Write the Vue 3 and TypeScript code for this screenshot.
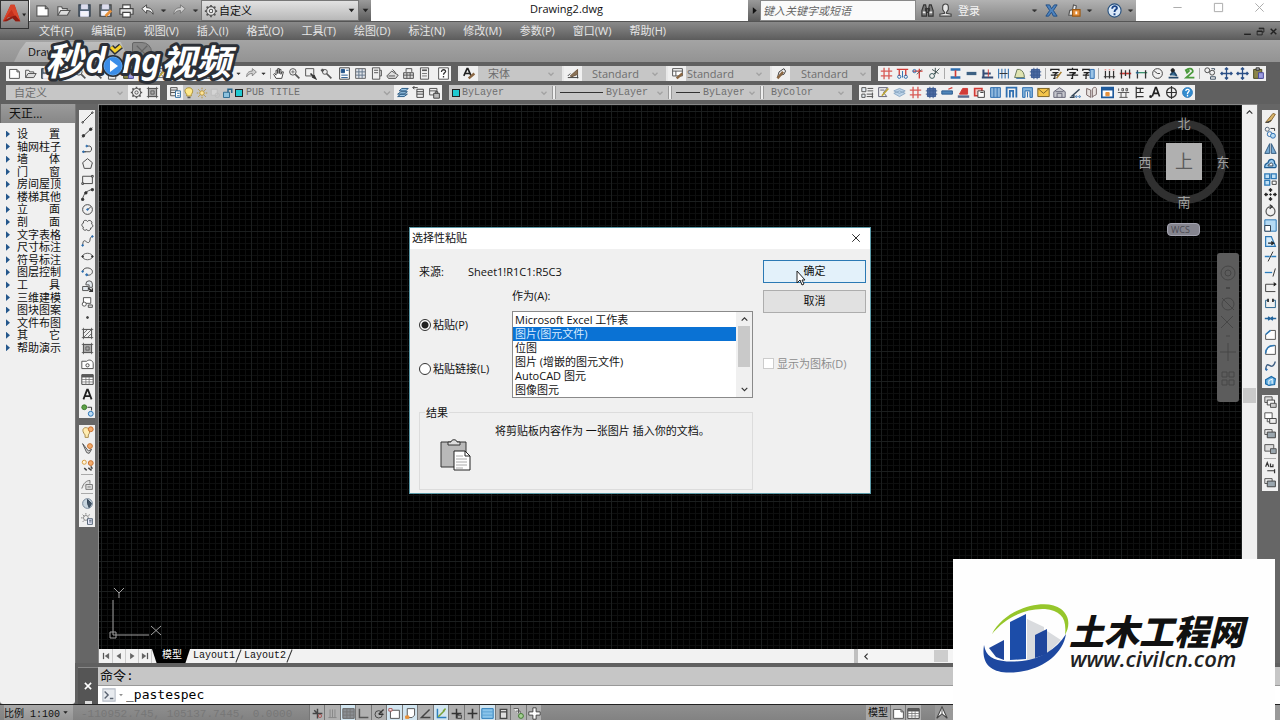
<script setup lang="ts">
import { h, ref } from 'vue'

const B = '#2f6fb0'
const R = '#d23b36'
const O = '#e8913a'

const p = (d: string, stroke = '#4a4a4a', fill = 'none', w = 1.2) =>
  `<path d="${d}" stroke="${stroke}" fill="${fill}" stroke-width="${w}"/>`
const c = (x: number, y: number, r: number, stroke = '#4a4a4a', fill = 'none', w = 1.2) =>
  `<circle cx="${x}" cy="${y}" r="${r}" stroke="${stroke}" fill="${fill}" stroke-width="${w}"/>`

const icons: Record<string, string> = {
  new: p('M2 3h9l3 3v8H2z', '#555', '#fff') + p('M11 3v3h3', '#555'),
  open: p('M2 13V4h4l1 2h5v2', '#555', '#eee') + p('M2 13l3-5h10l-3 5z', '#555', '#ddd'),
  save: p('M2 2h12v12H2z', '#35414d', '#56677a') + p('M5 2h6v4H5z', '#dde', '#dde') + p('M4 9h8v5H4z', '#eef', '#f4f4f8'),
  saveas: p('M2 2h12v12H2z', '#444', '#67727f') + p('M5 2h6v4H5z', '#dde', '#dde') + p('M4 9h8v4H4z', '#eef', '#f4f4f8') + p('M8 14l6-6', O, 'none', 3),
  print: p('M4 6V2h8v4', '#444', '#fff') + p('M1 6h14v6H1z', '#444', '#e4e4e4') + p('M4 10h8v5H4z', '#444', '#fff'),
  undo: p('M2 6l5-4v3c5 0 7 3 7 7-2-3-4-4-7-4v3z', '#444', '#f4f4f4', 1),
  redo: p('M14 6L9 2v3C4 5 2 8 2 12c2-3 4-4 7-4v3z', '#777', '#d0d0d0', 1),
  tinydown: p('M5 7h6l-3 3z', '#333', '#333', 1),
  down: p('M3 5h10l-5 6z', '#222', '#222', 0),
  play: p('M5 2l7 6-7 6z', '#111', '#111', 0),
  chev: p('M4 6l4 4 4-4', '#a2a2a2', 'none', 2),
  chevdark: p('M3 5l5 5 5-5', '#333', 'none', 2),
  chevup: p('M3 10l5-5 5 5', '#333', 'none', 2),
  chevleft: p('M10 3L5 8l5 5', '#333', 'none', 2),
  gear: c(8, 8, 5, '#555', '#eee') + c(8, 8, 2, '#555') + p('M8 1v2M8 13v2M1 8h2M13 8h2M3 3l2 2M11 11l2 2M13 3l-2 2M5 11l-2 2', '#555', 'none', 2),
  binoc: p('M2 14V8l2-6h2l1 5v7zM14 14V8l-2-6h-2L9 7v7zM6 6h4v4H6z', '#333', '#777') + p('M3 10h3M10 10h3', '#eee', 'none', 2),
  user: p('M5 4a3 3 0 016 0v3L9 10v1l5 1v2H2v-2l5-1v-1L5 7z', '#444', '#e6e6e6'),
  exch: p('M2 2h4l2 4 3-4h3l-4 6 4 6h-4l-2-4-3 4H2l4-6z', '#1f4d85', '#4e83bd', 1),
  key: p('M3 13l1-5 3-1 1-5 3 1-1 6 3 4z', '#555', '#eee') + p('M7 7h8v7H7z', '#9b5a16', O) + p('M11 9v3', '#fff', 'none', 2),
  help: c(8, 8, 7, '#28517e', '#dbe9f8') + p('M5.500 6c0-4 6-3 5 0-1 1-2.500 1.500-2.500 3.500M8 11v2', '#1a4488', 'none', 2),
  hand: p('M5 14L2 9l1-1 2 2V4h2v4-6h2v6-5h2v6l1-3h2l-2 8z', '#444', '#fff'),
  zoom: c(6, 6, 4, '#555', '#eee') + p('M9 9l5 5', '#555', 'none', 2) + p('M6 4v4M4 6h4', '#777'),
  zoomw: p('M2 2h10v9H2z', '#555') + p('M8 8l6 6M10 12l4 2-2-4', '#333', '#eee', 2),
  zoomp: c(6, 6, 3, '#555', '#eee') + p('M1 4h4M3 2v4M8 8l6 6', '#555', 'none', 2),
  props: p('M2 1h12v14H2z', '#444', '#fff') + p('M4 3h4v4H4z', '#24558c', '#24558c') + p('M10 4h3M4 10h8M4 13h8', '#24558c'),
  center: p('M2 2h12v12H2z', '#666', '#e1e4ea') + p('M2 6h12M2 10h12M6 2v12M10 2v12', '#66788c'),
  palette: p('M3 1h9v14H3z', '#555', '#eee') + p('M5 4h5M5 7h5M12 4h2v7h-2', '#555'),
  sheet: p('M1 11l6-6 8 5-3 4H3z', '#555', '#ddd') + p('M3 11h8M8 3l4 4', '#555'),
  markup: p('M2 7h12v7H2z', '#555', '#ddd') + p('M5 6V2h7v4M2 10h12M6 7v7M10 7v7', '#555'),
  laylock: p('M2 3h9v8H2zM2 6h9', '#555', '#eee') + p('M7 9h7v6H7z', '#444', '#bbb') + p('M9 9V7h3v2', '#444'),
  calc: p('M3 1h10v14H3z', '#555', '#eee') + p('M5 4h6', '#555', 'none', 2) + p('M5 8h6M5 11h6', '#777'),
  qm: p('M2 1h12v14H2z', '#555', '#fff') + p('M5.500 6c0-4 6-3 5 0-1 1-2.500 1.500-2.500 3.500M8 11v2', '#333', 'none', 1.600),
  astyle: p('M1 11L5 2h1l4 9M3 8h6', '#222', 'none', 2) + p('M7 14l7-6', '#8b6844', 'none', 3),
  dimstyle: p('M1 13h13M13 9v5M1 11l3-3', '#444') + p('M4 11l9-8v6l-7 3z', '#6d553e', '#8c7357'),
  tabstyle: p('M2 2h12v9H2zM2 5h12M6 5v6', '#555', '#fff') + p('M7 14l7-6', '#8b6844', 'none', 3),
  mlstyle: p('M3 13l2-7 6-4 2 3-2 4-4 1', '#444') + p('M3 14l7-8', '#8b6844', 'none', 3),
  layers: p('M2 2h8v10H2zM2 5h8M2 8h8', '#555', '#eee') + p('M8 6h6v8H8zM10 9h3M10 12h3', '#336f9f', '#fff'),
  bulb: p('M5 10C0 4 4 1 8 1s7 4 3 9v2H5z', '#a88b2d', '#ffe98a') + p('M6 14h4', '#555', 'none', 2),
  sun: c(8, 8, 3, '#b28e33', '#ffe59a') + p('M8 1v2M8 13v2M1 8h2M13 8h2M3 3l2 2M11 11l2 2M13 3l-2 2M5 11l-2 2', '#b28e33'),
  freeze: p('M3 3h8v8H3z', '#bbb', '#d4d4d4') + c(11, 11, 3, '#bbb'),
  lock: p('M2 7h8v7H2z', '#27658a', '#8cc1dd') + p('M8 7V3h5v5', '#27658a', 'none', 2),
  layprev: p('M2 10l4-3h8l-4 3zM2 13l4-3h8l-4 3zM4 6l3-3h8l-3 3z', '#2c5c84', '#9cc6e5'),
  layst: p('M6 4h8v10H6zM6 7h8M6 10h8M1 2h6M1 2l2 2M1 2l2-2', '#444'),
  axis: p('M5 1v14M11 1v14M1 5h14M1 11h14', '#d85a55', 'none', 1.600),
  axis2: p('M1 3h14M4 3v8M12 3v8', R, 'none', 1.600) + c(4, 12, 2, B) + c(12, 12, 2, B) + p('M8 5v8', B),
  axis3: p('M1 5h12M9 2v12', R, 'none', 1.600) + c(3, 5, 2, B) + p('M6 9l6-6', '#555'),
  cut: c(5, 11, 3, '#355') + p('M7 9l7-7M5 3l8 5M9 1v8', '#455'),
  ibeam: p('M2 3h12M2 13h12', B, 'none', 3) + p('M8 4v8', R, 'none', 2),
  minus: p('M2 8h12', '#3d6183', 'none', 4),
  wall: p('M1 13h14M3 3v9M3 8h9', '#354c75', 'none', 2.500) + p('M9 3v9', R),
  split: p('M2 2v12M14 2v12M6 2v12M10 2v12', B, 'none', 1.300) + p('M3 8h10', '#333'),
  fan: p('M2 13L5 3h3c4 1 6 5 6 10z', '#68785a', '#dfe3b0') + p('M4 14h11', B),
  column: p('M3 3h10v10H3z', '#3c5a92', '#4d6ba3') + p('M1 6h14M1 10h14M6 1v14M10 1v14', '#3c5a92'),
  zi: p('M2 5V3h12v2M8 1v2M4 7h8L8 9v5H6M1 10h14', '#222', 'none', 1.600),
  zipen: p('M1 5V3h10v2M3 7h6L6 9v5H4M1 10h10', '#222', 'none', 1.500) + p('M8 14l6-8', '#a87c28', 'none', 2),
  zidoc: p('M1 5V3h8v2M2 7h6L5 9v5H4M1 10h8', '#222', 'none', 1.500) + p('M10 3h5v11h-5z', B, '#9bc4e6'),
  dims: p('M1 12h14M3 5v9M8 5v9M13 5v9', '#333', 'none', 1.500) + p('M3 3v1M8 3v1M13 3v1', R, 'none', 2),
  dimr: p('M1 8h14', R, 'none', 2) + p('M3 3v11M13 3v11M8 4v7', '#333', 'none', 1.600),
  dimg: p('M1 7h14', '#2c8a62', 'none', 1.500) + p('M3 4v10M13 4v10', '#333', 'none', 1.600) + c(3, 7, 1, B),
  clock: c(8, 8, 6, '#444') + p('M8 8L4 5M8 8h3', '#444'),
  person: p('M2 13h12M4 10l4-5 4 6', '#25496a', '#386f98', 2) + c(7, 4, 2, '#222', '#222'),
  green: p('M4 5c1-4 9-4 8 1L4 13h10M3 3l2 4 3-3', '#4a9a3c', 'none', 2.200),
  copyc: c(4, 4, 3) + c(10, 7, 3) + p('M8 12h6v3H8zM9 2h4v2', '#456'),
  move: p('M8 1v14M1 8h14M6 3l2-2 2 2M6 13l2 2 2-2M3 6L1 8l2 2M13 6l2 2-2 2', '#2b4f86', 'none', 1.600),
  paste: p('M2 3h10v11H2z', '#4d4a23', '#8b8448') + p('M5 1h4v3H5z', '#333', '#aaa') + p('M8 7h6v7H8z', '#4a4a9c', '#9d9de0'),
  list: p('M1 2h5v5H1zM8 3h7M8 6h7M1 10h4v4H1zM7 10h8M7 13h8M14 8v7', '#555', '#e6eef4'),
  editd: p('M2 2h11L8 8l4 5H2zM4 5h5', '#667') + p('M6 12l8-9', '#bda534', 'none', 2),
  stack: p('M1 9l7-3 7 3-7 4zM1 6l7-3 7 3-7 3z', '#8ba9c5', '#bcd3e8'),
  arrowl: p('M1 6h13v4H1z', '#2b5b91', '#4f85b8') + p('M9 4l5-2', R, 'none', 1.600),
  redroof: p('M3 10l4-7h6v7z', R, R) + p('M1 13h14', '#5b6b8c', 'none', 3),
  redwin: p('M2 3h9v9H2z', R, '#f7c9c5', 2) + p('M6 6h8v8H6zM9 8h4', '#444', '#fff'),
  curtain: p('M2 2h12v12H2z', B, '#8fb8dd') + p('M6 2v12M10 2v12', B),
  door: p('M2 14V2h12v12M6 14V6h4v8', B, 'none', 2.200),
  door2: p('M2 14V2h12v12h-3V6H5v8z', B, '#83b5dc') + p('M8 7v7', B),
  mail: p('M1 3h14v10H1z', '#7c6326', '#f4c54a') + p('M1 3l7 6 7-6', '#7c6326'),
  house: p('M1 7l7-5 7 5v7H1z', '#667', '#c7c9ce') + p('M5 14V9h6v5M3 7h10', '#667'),
  stairs: p('M3 13l10-9', '#345', 'none', 1.800) + p('M1 14h5v-3', '#345', 'none', 1.800) + c(13, 13, 1, B) + c(9, 13, 1, B),
  books: p('M2 3l5 2v9l-5-3zM14 3c0-2-5-2-5 2v9c1-3 5-2 5-4z', '#766', '#e8e3e0'),
  grid: p('M1 2h14v12H1z', '#1e5a9c', '#fff', 2) + p('M1 4h14', '#1e5a9c', 'none', 3) + p('M6 8h4v4H6z', O, O),
  scale: p('M1 8h14M5 8v6M11 8v6M3 14h10M2 3v3M6 3h2v3H6zM11 3h2v3h-2z', '#555'),
  levels: p('M4 1v14M4 3h9M4 8h9M4 13h9M9 3v5', '#333', 'none', 1.500),
  atext: p('M4 13L8 2h1l4 11M6 9h6', '#222', 'none', 2) + p('M1 12h2v2H1z', '#222', '#222'),
  compass: c(8, 8, 6, '#333', 'none', 1.500) + p('M8 0v16M2 8h12', '#333', 'none', 1.500),
  blueq: c(8, 8, 6, '#2677b9', '#338dd0') + p('M6 6c0-3 5-2 4 0L8 9v1M8 11v2', '#fff', 'none', 1.600),
  line: p('M2 14L14 2') + c(2, 14, 1) + c(14, 2, 1),
  xline: p('M1 14L14 2') + c(3, 12, 1.500, '#333', '#333') + c(12, 4, 1.500, '#333', '#333'),
  pline: p('M2 12h9a4 4 0 000-7H7M2 12h4') + c(7, 5, 1, B, B) + c(3, 12, 1, B, B),
  poly: p('M8 2l6 5-2 7H4L2 7z'),
  rect: p('M2 4h12v9H2z') + p('M1 12h2v2H1zM13 3h2v2h-2z', '#444', '#fff'),
  arc: p('M2 14C3 7 7 3 14 2') + c(2, 14, 1.500, '#333', '#333') + c(6, 6, 1.500, '#333', '#333') + c(14, 2, 1.500, '#333', '#333'),
  circle: c(8, 8, 6) + p('M8 8l4-3') + c(8, 8, 1, B, B),
  cloud: p('M8 3c2-3 7 0 5 3 3 2 1 5-1 5 0 4-4 4-5 2-2 2-6 0-4-3-3-1-2-5 0-5-1-4 4-4 5-2z'),
  spline: p('M2 14c1-12 5-1 8-4 2-2 0-6 4-7') + c(2, 14, 1, B, B) + c(14, 3, 1, B, B),
  ellipse: '<ellipse cx="8" cy="8" rx="6" ry="4" stroke="#444" fill="none"/>' + c(2, 8, 1, '#333', '#333') + c(14, 8, 1, '#333', '#333'),
  earc: p('M2 8c1-7 13-5 12 1-1 4-6 4-7 3') + c(7, 12, 1.200, B, B) + c(2, 8, 1, B, B),
  insert: p('M6 5a4 4 0 018 0v4h-4V6H6zM2 8h7v5H2z', '#555', '#e3e9ee') + p('M9 10l5 4M14 10v4h-4', '#333', 'none', 1.600),
  block: p('M3 2h9v7H3z', '#555', '#fff') + c(4, 10, 2.500, '#555', '#fff') + p('M9 11h5v3H9z', '#555', '#ddd'),
  point: c(8, 8, 1.200, '#444', '#444'),
  hatch: p('M3 3h10v10H3zM1 3h14M1 13h14M3 1v14M13 1v14M3 8l5-5M3 13L13 3M8 13l5-5', '#555', 'none', 1),
  grad: p('M3 3h10v10H3z', '#555', '#aaa') + p('M1 3h14M1 13h14M3 1v14M13 1v14M6 6h4v4H6z', '#555', 'none', 1),
  region: p('M1 13V4h6c3-3 8-1 8 3v6z', '#555', '#fff') + c(8, 9, 2),
  table: p('M1 2h14v12H1z', '#444', '#fff') + p('M1 4h14', '#555', 'none', 3) + p('M1 8h14M1 11h14M6 5v9M10 5v9', '#777', 'none', 1),
  A: p('M3 14L7.500 2h1L13 14M5 10h6', '#222', 'none', 2.200),
  addsel: c(4, 4, 3, '#3f7a2e', '#5ca046') + p('M8 4h5v4', '#333') + c(12, 12, 3, '#2a74b5', '#bcdcf5'),
  lampo: p('M5 11C0 5 3 2 6 2s7 4 3 9v3H5z', '#a88b4d', '#ffecb0') + c(12, 4, 3, '#c9702b', '#f2ab6c'),
  keyo: p('M2 2l7 9 4-2-3 5-3-1z', '#555', '#ddd') + c(11, 5, 3, '#c9702b', '#f2ab6c'),
  dots: c(4, 4, 2.500, '#d69c3e', '#fff5dd') + c(12, 5, 3, '#c9702b', '#f2ab6c') + p('M4 11l3 3M9 11l4 3M12 9l2 3', '#444', 'none', 1.800),
  lockg: p('M1 13C3 6 7 3 11 3v4M6 8h8v6H6zM8 11h4', '#777', '#e2e2e2'),
  globe: c(8, 8, 6, '#789', '#c8d5df') + p('M8 3l5 5-3 5-2-5z', '#345', '#456'),
  sheetsun: c(6, 6, 3, '#888') + p('M6 0v2M0 6h2M2 2l2 2M11 2L9 3M2 11l2-2', '#888') + p('M8 7h6v7H8zM10 9h3M10 11h3', '#567', '#eef'),
  erase: p('M2 14l9-11 3 1-6 9z', '#8b6a35', '#d8b469') + p('M2 14h4l3-3', '#444', '#444'),
  copy: c(4, 4, 2.500, '#567') + c(7, 10, 3, B) + c(11, 12, 3, B, '#b9dcf4') + p('M8 3h5v3', '#333'),
  mirror: p('M7 2v12H1zM9 2v12h6z', '#345b80', '#79acd5'),
  offset: p('M1 13c-1-5 3-5 4-6 1-6 9-5 8 1 3 1 2 5 1 5z', '#1f5e94', '#9bcaed', 1.600) + p('M5 11c0-2 1-2 2-2 1-3 4-2 4 2z', '#345', '#fff'),
  array: p('M1 1h6v6H1zM9 1h6v6H9zM1 9h6v6H1z', '#2e79b6', '#bfe0f6', 1.600) + p('M10 10h5v4h-5z', '#444', '#fff'),
  movek: p('M8 1v4M8 11v4M1 8h4M11 8h4M6 3l2-2 2 2M6 13l2 2 2-2M3 6L1 8l2 2M13 6l2 2-2 2', '#222', 'none', 1.600) + c(8, 8, 1, '#222', '#222'),
  rotate: c(8, 9, 5.500, '#555', 'none', 1.500) + p('M7 1l3 2-3 3', '#333', 'none', 1.500),
  scl: p('M1 1h14v14H1z', '#2e79b6', '#b5daf4') + p('M1 8h7v7H1z', '#345', '#fff'),
  stretch: p('M2 2h7l5 12H2z', '#2e79b6', '#d8ecfa', 1.500) + p('M5 10h6M9 8l3 2-3 2', '#222', 'none', 1.600),
  trim: p('M1 8h6M9 8h6', '#2c7ebd', 'none', 1.600) + p('M5 14l6-12', '#333'),
  extend: p('M1 8h9', '#2c7ebd', 'none', 1.600) + p('M11 13l3-10', '#333'),
  brk: p('M2 4h12M2 4v9h12', '#444') + p('M12 2l3 2-3 2', '#222', '#222'),
  brk2: p('M5 4H2v9h12V4h-3', '#27658f') + p('M5 2v4M11 2v4', '#222', 'none', 2),
  join: p('M1 8h14M5 6l3 2-3 2M11 6L8 8l3 2', '#23659c', 'none', 1.600),
  chamfer: p('M2 14V8l6-5h6v11z', '#555', '#fff') + p('M2 8l6-5', '#2e79b6', 'none', 2),
  fillet: p('M2 14c0-7 4-11 12-11v11z', '#555', '#fff') + p('M2 13C2 7 6 3 13 3', '#2e79b6', 'none', 2),
  blend: p('M2 13C4-2 9 18 14 3', '#3f5f83', 'none', 1.600) + c(3, 13, 1, B, B),
  explode: p('M2 7l7-4 5 3-1 7-7 1-4-2z', '#1d6ba8', '#6cb4e4', 1.500) + p('M6 8l5-2M6 8v5M10 7v5', '#fff'),
  ord: p('M1 1h9v7H1z', '#555', '#ddd') + p('M4 5h9v6H4z', '#444', '#f5f5f5') + p('M8 9h7v5H8z', '#555', '#ccc'),
  ord1: p('M1 1h9v7H1z', '#555', '#fff') + p('M7 8h8v6H7z', '#444', '#eee') + p('M4 8v4h3', '#555'),
  ord2: p('M1 2h9v6H1z', '#555', '#eee') + p('M4 5h10v7H4z', '#444', '#9aa6ae'),
  ord3: p('M1 2h11v8H1z', '#555', '#ddd') + p('M8 7h7v6H8z', '#555', '#9aa6ae'),
  ordt: p('M2 7l2-5 2 5M8 3v4h3V4M4 12h9v2M13 10v5', '#333', 'none', 1.500),
  first: p('M4 3v10', '#555', 'none', 2) + p('M13 3v10L6 8z', '#666', '#666', 0),
  prev: p('M11 3v10L4 8z', '#666', '#666', 0),
  next: p('M5 3v10l7-5z', '#666', '#666', 0),
  last: p('M12 3v10', '#555', 'none', 2) + p('M3 3v10l7-5z', '#666', '#666', 0),
  prompt: p('M1 1h14v14H1z', '#b5bcc6', '#e8ebef') + p('M3 4l4 4-4 4M9 12h4', '#5a6370', 'none', 1.600),
  x: p('M3 3l10 10M13 3L3 13', '#fff', 'none', 2.500),
  xdark: p('M3 3l10 10M13 3L3 13', '#222', 'none', 2.500),
  closethin: p('M2 2l12 12M14 2L2 14', 'currentColor', 'none', 1.400),
  min: p('M2 8h12', 'currentColor', 'none', 1.400),
  max: p('M2 2h12v12H2z', 'currentColor', 'none', 1.400),
  mdimin: p('M2 13h12', '#222', 'none', 2.500),
  mdirest: p('M5 2h9v7h-3M2 7h9v7H2z', '#222', 'none', 1.600) + p('M5 3h9M2 8h9', '#222', 'none', 2),
  snap: p('M8 2v12M2 8h12M4 4l3 3', '#444', 'none', 1.800) + c(11, 11, 2, '#a55'),
  snap2: p('M8 2v12M2 8h12M8 8l5 5', '#333', 'none', 1.800) + p('M9 10h5v4H9z', '#444', '#aaa'),
  grids: p('M3 13h10M5 3v10M8 3v10M11 3v10', '#888'),
  gridg: p('M1 2h14v12H1z', '#666', '#8b8f94') + p('M1 6h14M1 10h14M6 2v12M10 2v12', '#777'),
  ortho: p('M3 2v11h11', '#555', 'none', 1.800),
  polar: c(7, 9, 4.500, '#444') + p('M7 9l6-6M7 9h6', '#333', 'none', 1.600),
  osnap: p('M3 4h11v10H3z', '#555', '#fff') + p('M1 2h4v3H1z', '#a55', '#fff'),
  osnap3: p('M4 2h9v8l-3 3H4z', '#555', '#fff') + p('M2 11h4v3H2z', O, O),
  angle: p('M13 3L3 13h11', '#444', 'none', 1.800),
  ducs: p('M3 2v11h11', '#2f80bd', 'none', 1.800) + p('M4 12l8-8M10 5l3-3', '#7aa23a', 'none', 1.800),
  plus: p('M8 2v12M2 8h12', '#333', 'none', 2),
  trans: p('M1 2h14v12H1z', '#2d7bb8', '#8ac4ea') + p('M1 6h14M1 10h14', '#5aa2d4'),
  quick: p('M4 3h8v11H4zM4 6h8', '#444', '#ddd', 1.600),
  sel: p('M2 2h6v6M5 5h5v5', '#555', '#fff') + c(11, 11, 3, '#3f7a2e', '#a4cf93'),
  cross: p('M6 1h4v5h5v4h-5v5H6v-5H1V6h5z', '#444', '#fff'),
  annos: p('M8 1L2 14l6-5 6 5z', '#444', '#fff') + p('M8 2v8', '#666'),
}

const Icon = (props: { n: string }) =>
  h('svg', { viewBox: '0 0 16 16', class: 'ic', 'aria-hidden': 'true', innerHTML: icons[props.n] })
Icon.props = ['n']

const menus = ['文件(F)', '编辑(E)', '视图(V)', '插入(I)', '格式(O)', '工具(T)', '绘图(D)', '标注(N)', '修改(M)', '参数(P)', '窗口(W)', '帮助(H)']
const quick = ['new', 'open', 'save', 'saveas', 'print']
const standard = 'new open save print | zoom zoomp palette paste copyc editd cut | props markup undo tinydown redo tinydown | hand zoom zoomw zoomp | props center palette sheet markup calc | qm'.split(' ')
const tangent1 = 'axis axis2 axis3 cut | ibeam minus wall split fan column | zipen zi zidoc | dims dimr dimg clock person green | copyc move move paste'.split(' ')
const tangent2 = 'list editd stack axis column arrowl redroof redwin curtain door door2 mail house stairs books grid scale levels atext compass blueq'.split(' ')
const styles = [
  { icon: 'astyle', text: '宋体', cls: 's0' },
  { icon: 'dimstyle', text: 'Standard', cls: 's1' },
  { icon: 'tabstyle', text: 'Standard', cls: 's2' },
  { icon: 'mlstyle', text: 'Standard', cls: 's3' },
]
const draw1 = 'line xline pline poly rect arc circle cloud spline ellipse earc insert block point hatch grad region table A addsel'.split(' ')
const draw2 = 'lampo keyo dots | lockg | globe sheetsun'.split(' ')
const mod1 = 'erase copy mirror offset array movek rotate scl stretch trim extend brk brk2 join chamfer fillet blend explode'.split(' ')
const mod2 = 'ord ord1 ord2 ord3 | ordt ord2'.split(' ')
const tree = ['设 置', '轴网柱子', '墙 体', '门 窗', '房间屋顶', '楼梯其他', '立 面', '剖 面', '文字表格', '尺寸标注', '符号标注', '图层控制', '工 具', '三维建模', '图块图案', '文件布图', '其 它', '帮助演示']
const toggles = 'snap grids gridg ortho polar osnap osnap3 angle ducs snap2 plus trans quick sel cross'.split(' ')
const lit = ['gridg', 'osnap', 'osnap3', 'ducs', 'trans']

const formats = ['Microsoft Excel 工作表', '图片(图元文件)', '位图', '图片 (增嵌的图元文件)', 'AutoCAD 图元', '图像图元']
const chosen = ref(1)
const mode = ref('paste')
const command = ref('_pastespec')
const keyword = ref('')
</script>

<template>
  <div class="app">
    <header class="title">
      <button class="appbtn" aria-label="应用程序菜单">
        <svg viewBox="0 0 28 28" class="alogo" aria-hidden="true">
          <path d="M2 21L10 4h4l6 17h-5l-2-5-6 1-2 4z" fill="#c4301c" />
          <path d="M10 4h4l6 17-4-2-5-10-9 12z" fill="#d8452b" />
          <path d="M2 21l9-5 4-1 5 6h-5l-3-3-6 3z" fill="#8e1b10" />
          <path d="M22 13h4l-2 3z" fill="#222" />
        </svg>
      </button>
      <div class="quick">
        <button v-for="q in quick" :key="q" class="qb" :aria-label="q"><Icon :n="q" /></button>
        <button class="qb" aria-label="undo"><Icon n="undo" /></button>
        <button class="qa" aria-label="undo list"><Icon n="tinydown" /></button>
        <button class="qb" aria-label="redo"><Icon n="redo" /></button>
        <button class="qa" aria-label="redo list"><Icon n="tinydown" /></button>
      </div>
      <label class="workspace">
        <Icon n="gear" />
        <select aria-label="工作空间"><option>自定义</option></select>
        <Icon n="down" class="s9" />
      </label>
      <button class="tail" aria-label="更多"><Icon n="down" /></button>
      <h1 class="name">Drawing2.dwg</h1>
      <button class="tail" aria-label="展开"><Icon n="play" /></button>
      <input v-model="keyword" class="search" type="text" placeholder="键入关键字或短语" aria-label="搜索">
      <div class="account">
        <button class="ab" aria-label="search"><Icon n="binoc" /></button>
        <button class="login"><Icon n="user" /><span>登录</span></button>
        <button class="qa" aria-label="login list"><Icon n="tinydown" /></button>
        <button class="ab" aria-label="exchange"><Icon n="exch" /></button>
        <button class="ab" aria-label="keys"><Icon n="key" /></button>
        <button class="qa" aria-label="keys list"><Icon n="tinydown" /></button>
        <button class="ab hp" aria-label="help"><Icon n="help" /></button>
        <button class="qa" aria-label="help list"><Icon n="tinydown" /></button>
      </div>
      <div class="winctl">
        <button aria-label="最小化"><Icon n="min" /></button>
        <button aria-label="最大化"><Icon n="max" /></button>
        <button aria-label="关闭"><Icon n="closethin" /></button>
      </div>
    </header>

    <nav class="menus">
      <button v-for="m in menus" :key="m">{{ m }}</button>
      <span class="mdi">
        <button aria-label="min"><Icon n="mdimin" /></button>
        <button aria-label="restore"><Icon n="mdirest" /></button>
        <button aria-label="close"><Icon n="xdark" /></button>
      </span>
    </nav>

    <div class="docs">
      <button class="doc">Drawing2</button>
      <button class="plus" aria-label="新建"><Icon n="closethin" /></button>
    </div>

    <div class="bars">
      <div class="row">
        <div class="bar std">
          <template v-for="(i, k) in standard" :key="k">
            <i v-if="i === '|'" class="sep" />
            <button v-else :class="i === 'tinydown' ? 'td' : 'tb'" :aria-label="i"><Icon :n="i" /></button>
          </template>
        </div>
        <div class="bar combos">
          <label v-for="(s, k) in styles" :key="k" class="cg">
            <span class="tb"><Icon :n="s.icon" /></span>
            <span class="combo" :class="s.cls">
              <select disabled :aria-label="s.icon"><option>{{ s.text }}</option></select>
              <Icon n="chev" />
            </span>
          </label>
        </div>
        <div class="bar">
          <template v-for="(i, k) in tangent1" :key="k">
            <i v-if="i === '|'" class="sep" />
            <button v-else class="tb" :aria-label="i"><Icon :n="i" /></button>
          </template>
        </div>
      </div>
      <div class="row">
        <div class="bar custom">
          <label class="combo c0">
            <select disabled aria-label="自定义"><option>自定义</option></select>
            <Icon n="chev" />
          </label>
          <button class="tb" aria-label="settings"><Icon n="gear" /></button>
          <button class="tb" aria-label="workspace"><Icon n="grad" /></button>
        </div>
        <div class="bar layer">
          <button class="tb" aria-label="layers"><Icon n="layers" /></button>
          <label class="combo c1">
            <Icon n="bulb" /><Icon n="sun" /><Icon n="freeze" /><Icon n="lock" /><i class="sw" />
            <select disabled class="mono" aria-label="图层"><option>PUB TITLE</option></select>
            <Icon n="chev" />
          </label>
          <button class="tb" aria-label="layer previous"><Icon n="layprev" /></button>
          <button class="tb" aria-label="layer state"><Icon n="layst" /></button>
          <button class="tb" aria-label="layer lock"><Icon n="laylock" /></button>
        </div>
        <div class="bar attrs">
          <label class="combo c2"><i class="sw" /><select disabled class="mono" aria-label="颜色"><option>ByLayer</option></select><Icon n="chev" /></label>
          <i class="sep2" />
          <label class="combo c3"><i class="ln" /><select disabled class="mono" aria-label="线型"><option>ByLayer</option></select><Icon n="chev" /></label>
          <i class="sep2" />
          <label class="combo c4"><i class="ln short" /><select disabled class="mono" aria-label="线宽"><option>ByLayer</option></select><Icon n="chev" /></label>
          <i class="sep2" />
          <label class="combo c5"><select disabled class="mono" aria-label="打印样式"><option>ByColor</option></select><Icon n="chev" /></label>
        </div>
        <div class="bar">
          <button v-for="(i, k) in tangent2" :key="k" class="tb" :aria-label="i"><Icon :n="i" /></button>
        </div>
      </div>
    </div>

    <div class="middle">
      <aside class="palette">
        <h2>天正...</h2>
        <ul class="tree">
          <li v-for="t in tree" :key="t"><i class="tri" /><span>{{ t }}</span></li>
        </ul>
      </aside>
      <div class="rest">
        <div class="upper">
          <div class="dock">
            <div class="vbar v20">
              <button v-for="i in draw1" :key="i" :aria-label="i"><Icon :n="i" /></button>
            </div>
            <div class="vbar v7">
              <template v-for="(i, k) in draw2" :key="k">
                <i v-if="i === '|'" class="hsep" />
                <button v-else :aria-label="i"><Icon :n="i" /></button>
              </template>
            </div>
          </div>
          <main class="view">
            <div class="model">
              <div class="canvas">
                <svg class="cube" viewBox="0 0 96 100" aria-label="ViewCube">
                  <circle cx="48" cy="50" r="38" fill="none" stroke="#303030" stroke-width="8" />
                  <rect x="30" y="31" width="36" height="37" fill="#b0b0b0" />
                  <text x="48" y="56" font-size="18" fill="#5c5c5c">上</text>
                  <g font-size="13" fill="#a0a0a0">
                    <text x="48" y="16">北</text>
                    <text x="9" y="55">西</text>
                    <text x="87" y="55">东</text>
                    <text x="48" y="95">南</text>
                  </g>
                </svg>
                <button class="wcs">WCS</button>
                <div class="navbar">
                  <svg viewBox="0 0 22 149" fill="none" stroke="#464646" aria-hidden="true">
                    <circle cx="11" cy="20" r="7" /><circle cx="11" cy="20" r="3" />
                    <path d="M9 35h4" stroke-width="2" />
                    <circle cx="11" cy="51" r="6" /><path d="M5 45l12 12M4 63l12 12M16 63L4 75M9 83h4M11 90v18M3 99h16M5 119h5v5H5zM12 119h5v5h-5zM5 127h5v5H5zM12 127h5v5h-5z" />
                  </svg>
                </div>
                <svg class="ucs" viewBox="0 0 60 56" fill="none" stroke="#a0a0a0" aria-hidden="true">
                  <path d="M6 15v35h36M3 47h6v6H3zM7 3l5 5 5-5M12 8v5M44 41l10 9M54 41l-10 9" />
                </svg>
              </div>
              <div class="vscroll"><Icon n="chevup" /><i /></div>
            </div>
            <div class="tabs">
              <button v-for="n in ['first', 'prev', 'next', 'last']" :key="n" class="nb" :aria-label="n"><Icon :n="n" /></button>
              <button class="tab on">模型</button>
              <button class="tab">Layout1</button>
              <button class="tab">Layout2</button>
              <span class="hscroll"><i class="grip" /><Icon n="chevleft" /><i class="thumb" /></span>
            </div>
          </main>
          <div class="dock right">
            <div class="vbar v18">
              <button v-for="i in mod1" :key="i" :aria-label="i"><Icon :n="i" /></button>
            </div>
            <div class="vbar v6">
              <template v-for="(i, k) in mod2" :key="k">
                <i v-if="i === '|'" class="hsep" />
                <button v-else :aria-label="i"><Icon :n="i" /></button>
              </template>
            </div>
          </div>
        </div>
        <div class="cmd">
          <div class="handle"><button aria-label="关闭命令行"><Icon n="x" /></button><b /></div>
          <div class="lines">
            <div class="hist">命令:</div>
            <label class="entry"><Icon n="prompt" /><Icon n="down" class="s9 dim" /><input v-model="command" type="text" aria-label="命令"></label>
          </div>
        </div>
      </div>
    </div>

    <footer class="status">
      <button class="ratio">比例 1:100 <Icon n="down" class="s9" /></button>
      <span class="coords">-110952.745, 105137.7445, 0.0000</span>
      <button v-for="(t, k) in toggles" :key="k" class="tg" :class="{ lit: lit.includes(t) }" :aria-label="t"><Icon :n="t" /></button>
      <span class="grow" />
      <button class="ms">模型</button>
      <button class="tg" aria-label="layout"><Icon n="new" /></button>
      <button class="tg" aria-label="views"><Icon n="table" /></button>
      <button class="anno"><Icon n="annos" />1:1</button>
    </footer>

    <div class="overlay">
      <section class="dialog" role="dialog" aria-labelledby="dt">
        <div class="dhead"><h2 id="dt">选择性粘贴</h2><button aria-label="关闭"><Icon n="closethin" /></button></div>
        <div class="dbody">
          <div class="left">
            <p class="src"><span>来源:</span><span>Sheet1!R1C1:R5C3</span></p>
            <div class="pick">
              <div class="radios">
                <label><input v-model="mode" type="radio" name="mode" value="paste">粘贴(P)</label>
                <label><input v-model="mode" type="radio" name="mode" value="link">粘贴链接(L)</label>
              </div>
              <div class="as">
                <span id="asl">作为(A):</span>
                <div class="listwrap">
                  <ul role="listbox" aria-labelledby="asl">
                    <li v-for="(f, k) in formats" :key="f" role="option" :aria-selected="chosen === k" :class="{ sel: chosen === k }" @click="chosen = k">{{ f }}</li>
                  </ul>
                  <div class="lscroll"><Icon n="chevup" /><i /><Icon n="chevdark" /></div>
                </div>
              </div>
            </div>
            <fieldset>
              <legend>结果</legend>
              <svg class="clip" viewBox="0 0 32 32" aria-hidden="true">
                <path d="M1 3h25v25H1z" fill="#b9b9b9" stroke="#333" />
                <path d="M8 3h3c0-3 6-3 6 0h3v3H8z" fill="#ddd" stroke="#333" />
                <path d="M14 12h11l5 5v14H14z" fill="#fff" stroke="#222" />
                <path d="M25 12v5h5" fill="none" stroke="#222" />
                <path d="M16 17h7M16 20h11M16 23h11M16 26h11M16 29h7" stroke="#aaa" />
              </svg>
              <p>将剪贴板内容作为 一张图片 插入你的文档。</p>
            </fieldset>
          </div>
          <div class="side">
            <button class="ok">确定</button>
            <button>取消</button>
            <label class="show"><input type="checkbox" disabled>显示为图标(D)</label>
          </div>
        </div>
        <svg class="cursor" viewBox="0 0 10 16" aria-hidden="true">
          <path d="M1 1v12l3-3 2 5 2-1-2-4h3z" fill="#fff" stroke="#222" />
        </svg>
      </section>
    </div>

    <svg class="brand" viewBox="0 0 196 46" aria-label="秒dong视频">
      <text class="bt" y="35"><tspan x="3" font-size="38" class="cj">秒</tspan><tspan x="43" y="33" font-size="36">d</tspan><tspan x="80" font-size="34">n</tspan><tspan x="99" font-size="34">g</tspan><tspan x="119" y="35" font-size="35" class="cj">视频</tspan></text>
      <circle cx="71" cy="26" r="10" fill="#3b8de8" stroke="#2b2f36" stroke-width="2" />
      <circle cx="71" cy="26" r="9" fill="none" stroke="#5ba4f0" stroke-width="1" />
      <path d="M68 20l8 6-8 6z" fill="#fff" />
      <path d="M69 7l4 4 6-5" fill="none" stroke="#2b2f36" stroke-width="6" />
      <path d="M69 7l4 4 6-5" fill="none" stroke="#f5d02c" stroke-width="3" />
    </svg>

    <div class="sponsor">
      <svg viewBox="0 0 322 161" aria-label="土木工程网">
        <path d="M74 60l17 8v32l-17 1z" fill="#d9dbde" />
        <path d="M94 72l14 9-14 14z" fill="#d9dbde" />
        <path d="M36 89l15-8v20l-8-3z" fill="#1f469c" />
        <path d="M57 63l16-8v45l-16 1z" fill="#1c4da9" />
        <path d="M82 76l12-6v25l-12 4z" fill="#1f469c" />
        <path d="M39 75C52 49 93 38 108 50c9 7 9 17 4 26 2-17-4-24-20-26-21-1-41 10-53 25z" fill="#96c62b" />
        <path d="M31 86c-4 25 15 31 40 26 21-4 39-18 42-37-10 16-26 25-44 27-19 2-34-1-37-12z" fill="#1e48a0" />
        <text x="116" y="86" font-size="35" class="zh">土木工程网</text>
        <text x="117" y="108" font-size="22" class="url">www.civilcn.com</text>
      </svg>
    </div>
  </div>
</template>

<style>
html, body { margin: 0; height: 100%; overflow: hidden; background: #5f5f5f; }
#app { height: 100%; }
</style>

<style scoped>
.app { position: relative; height: 100vh; display: flex; flex-direction: column; overflow: hidden; background: #606060; font: 11px/14px "Open Sans", "Noto Sans CJK SC", sans-serif; color: #111; }
.app *, .app *::before { box-sizing: border-box; }
button { border: 0; padding: 0; margin: 0; background: none; font: inherit; color: inherit; display: flex; align-items: center; justify-content: center; }
select, input { font: inherit; margin: 0; }
select { appearance: none; border: 0; padding: 0; background: none; color: inherit; opacity: 1; }
h1, h2, p, ul { margin: 0; padding: 0; font: inherit; list-style: none; }
.ic { width: 14px; height: 14px; display: block; flex: none; }
.ic.s9 { width: 9px; height: 9px; }

.title { position: relative; display: flex; height: 21px; flex: none; background: #fff; padding-left: 30px; }
.appbtn { position: absolute; left: 0; top: 0; width: 29px; height: 29px; z-index: 2; background: linear-gradient(#b5b5b5, #7e7e7e); border: 1px solid #333; }
.alogo { width: 27px; height: 27px; }
.quick { display: flex; align-items: center; width: 171px; padding-left: 2px; background: linear-gradient(#b2b2b2, #858585); }
.quick .ic { width: 15px; height: 15px; }
.qb { width: 21px; height: 20px; }
.qa { width: 11px; height: 20px; }
.qa .ic { width: 11px; height: 11px; }
.workspace { width: 158px; display: flex; align-items: center; gap: 1px; padding: 0 2px; border: 1px solid #777; background: linear-gradient(#e2e2e2, #b8b8b8); }
.workspace select { flex: 1; height: 18px; }
.tail { width: 12px; background: linear-gradient(#9a9a9a, #5c5c5c); }
.tail .ic { width: 9px; height: 9px; }
.name { flex: 1; text-align: center; line-height: 17px; padding-left: 14px; }
.search { width: 156px; border: 1px solid #888; background: #fafafa; font-style: italic; padding: 0 2px; color: #555; }
.search::placeholder { color: #666; opacity: 1; }
.account { display: flex; align-items: center; width: 220px; background: linear-gradient(#b2b2b2, #858585); color: #f4f4f4; }
.ab { width: 22px; }
.ab .ic, .login .ic { width: 15px; height: 15px; }
.ab.hp { margin-left: 8px; }
.login { gap: 5px; flex: 1; justify-content: flex-start; }
.winctl { width: 144px; display: flex; justify-content: space-between; align-items: center; padding: 0 15px 6px 36px; color: #aaa; }
.winctl .ic { width: 11px; height: 11px; }

.menus { display: flex; align-items: center; gap: 18px; height: 19px; flex: none; padding-left: 39px; background: linear-gradient(#8a8a8a, #5c5c5c); color: #e6e6e6; border-top: 1px solid #555; }
.mdi { margin-left: auto; display: flex; gap: 4px; padding-right: 2px; }
.mdi .ic { width: 9px; height: 9px; }

.docs { display: flex; align-items: flex-end; height: 24px; flex: none; padding-left: 14px; background: linear-gradient(#a4a4a4, #939393); border-bottom: 2px solid #606060; }
.doc { width: 116px; height: 20px; padding-left: 14px; justify-content: flex-start; background: linear-gradient(#bebebe, #a8a8a8); clip-path: polygon(0 100%, 6px 40%, 12px 0, 92% 0, 100% 100%); }
.plus { width: 20px; height: 17px; margin: 0 0 3px 2px; background: #868686; color: #666; border: 1px solid #666; border-radius: 2px 10px 2px 2px; }

.bars { flex: none; display: flex; flex-direction: column; gap: 4px; padding: 2px 0 4px 6px; }
.row { display: flex; gap: 7px; height: 15px; }
.bar { display: flex; align-items: center; height: 15px; background: #f0f0f0; }
.tb { width: 16px; height: 15px; display: flex; align-items: center; justify-content: center; flex: none; }
.tb .ic { width: 13px; height: 13px; }
.td { width: 9px; }
.td .ic { width: 9px; height: 9px; }
.sep { width: 5px; height: 11px; background: linear-gradient(90deg, transparent 2px, #aaa 2px, #aaa 3px, transparent 3px); }
.std { width: 445px; flex: none; overflow: hidden; }
.combos { width: 413px; background: #c6c6c6; gap: 3px; flex: none; }
.cg { display: flex; flex: 1; }
.cg .tb { width: 20px; background: #f0f0f0; border-left: 2px solid #e8e8e8; }
.combo { display: flex; align-items: center; flex: 1; min-width: 0; height: 15px; background: #c6c6c6; color: #6e6e6e; }
.combo select { flex: 1; min-width: 0; height: 15px; line-height: 15px; }
.combo .ic { width: 10px; height: 10px; margin-right: 3px; }
.s0 { padding-left: 10px; } .s1 { padding-left: 10px; } .s2 { padding-left: 1px; } .s3 { padding-left: 11px; }
.combo .mono { font-family: "Liberation Mono", "DejaVu Sans Mono", monospace; font-size: 10px; line-height: 16px; }
.custom { width: 154px; flex: none; }
.c0 { padding-left: 8px; }
.layer { width: 275px; flex: none; }
.c1 .ic { margin-right: 1px; width: 12px; height: 12px; }
.c1 select { padding-left: 3px; }
.sw { width: 8px; height: 8px; background: #1fc9d0; border: 1px solid #222; flex: none; }
.attrs { width: 403px; flex: none; background: #c6c6c6; }
.combo.c2, .combo.c3, .combo.c4, .combo.c5 { flex: none; }
.c2 { width: 103px; padding-left: 3px; gap: 2px; }
.c3 { width: 112px; padding-left: 4px; gap: 3px; }
.c4 { width: 88px; padding-left: 4px; gap: 3px; }
.c5 { width: 85px; padding-left: 7px; }
.sep2 { width: 4px; height: 13px; background: #eee; border-right: 1px solid #999; border-left: 1px solid #999; }
.ln { width: 43px; height: 1px; background: #333; flex: none; }
.ln.short { width: 24px; }

.middle { flex: 1; min-height: 0; display: flex; }
.palette { width: 75px; flex: none; display: flex; flex-direction: column; background: #f0f0f0; border-radius: 0 0 3px 3px; }
.palette h2 { height: 19px; line-height: 20px; padding-left: 8px; font-size: 12px; background: linear-gradient(#9b9b9b, #878787); border-left: 1px solid #666; }
.tree { height: 226px; margin-top: 5px; display: flex; flex-direction: column; justify-content: space-between; }
.tree li { display: flex; align-items: center; height: 12px; }
.tree span { width: 43px; text-align-last: justify; white-space: nowrap; line-height: 12px; }
.tri { width: 4px; height: 7px; margin: 0 7px 0 6px; background: #24578c; clip-path: polygon(0 0, 100% 50%, 0 100%); }
.rest { flex: 1; min-width: 0; display: flex; flex-direction: column; }
.upper { flex: 1; min-height: 0; display: flex; }
.dock { width: 24px; flex: none; padding: 6px 4px 0; background: linear-gradient(90deg, #777 1px, #666 1px); display: flex; flex-direction: column; gap: 7px; border-right: 1px solid #8a8a8a; }
.dock.right { width: 23px; padding-left: 5px; padding-right: 2px; border-right: 0; }
.vbar { display: flex; flex-direction: column; justify-content: space-between; align-items: center; background: #f0f0f0; width: 16px; }
.vbar button { width: 16px; height: 15px; }
.vbar .ic { width: 13px; height: 13px; }
.v20 { height: 308px; } .v7 { height: 102px; } .v18 { height: 278px; } .v6 { height: 96px; }
.hsep { width: 12px; height: 1px; background: #aaa; }
.view { flex: 1; min-width: 0; display: flex; flex-direction: column; }
.model { flex: 1; min-height: 0; display: flex; border-top: 1px solid #888; }
.canvas { position: relative; flex: 1; background-color: #000;
  background-image:
    linear-gradient(90deg, #1b1e1e 1px, transparent 1px), linear-gradient(#1b1e1e 1px, transparent 1px),
    linear-gradient(90deg, #0e0f0f 1px, transparent 1px), linear-gradient(#0e0f0f 1px, transparent 1px);
  background-size: 30px 30px, 30px 30px, 6px 6px, 6px 6px;
  background-position: 2px 6px; }
.vscroll { width: 15px; background: #f0f0f0; display: flex; flex-direction: column; align-items: center; padding-top: 3px; }
.vscroll .ic { width: 9px; height: 9px; }
.vscroll i { width: 13px; height: 15px; margin-top: 271px; background: #c9c9c9; }
.cube { position: absolute; right: 10px; top: 7px; width: 96px; height: 100px; text-anchor: middle; font-family: "Noto Sans CJK SC", sans-serif; }
.wcs { position: absolute; right: 42px; top: 118px; width: 33px; height: 13px; padding-left: 3px; justify-content: flex-start; border-radius: 4px; border: 1px solid #a5a5b2; background: #85858f; color: #4a4a52; font-size: 9px; line-height: 11px; }
.navbar { position: absolute; right: 3px; top: 148px; width: 22px; height: 149px; background: #5c5c5c; border-radius: 3px; }
.navbar svg { display: block; width: 22px; height: 149px; }
.ucs { position: absolute; left: 8px; bottom: 8px; width: 60px; height: 56px; }
.tabs { height: 14px; flex: none; display: flex; align-items: stretch; background: #f2f2f2; font: 10px/14px "Liberation Mono", "Noto Sans CJK SC", monospace; padding-left: 1px; }
.nb { width: 13px; border-right: 1px solid #ccc; }
.nb .ic { width: 10px; height: 10px; }
.tab { position: relative; padding: 0 2px 0 3px; }
.tab::after { content: ""; width: 1px; height: 14px; background: #333; transform: rotate(22deg); margin-left: 3px; }
.tab.on { background: #000; color: #fff; padding: 0 8px 0 10px; clip-path: polygon(0 0, 100% 0, 88% 100%, 12% 100%); }
.tab.on::after { display: none; }
.hscroll { margin-left: auto; width: 403px; display: flex; align-items: center; background: #f4f4f4; }
.hscroll .ic { width: 9px; height: 9px; margin: 0 4px; }
.grip { width: 4px; height: 14px; background: #c0c0c0; }
.thumb { width: 14px; height: 12px; margin-left: 59px; background: #cdcdcd; }

.cmd { display: flex; flex: none; height: 41px; padding: 4px 0 0 3px; background: #606060; }
.handle { width: 20px; display: flex; flex-direction: column; align-items: center; justify-content: space-between; padding-top: 4px; background: #555; border-top: 1px solid #888; }
.handle .ic { width: 10px; height: 10px; margin-top: 9px; }
.handle b { width: 7px; height: 3px; background: #ddd; }
.lines { flex: 1; min-width: 0; font: 13px/18px "DejaVu Sans Mono", "Noto Sans CJK SC", monospace; }
.hist { height: 19px; padding-left: 2px; background: #c6c6c6; border-bottom: 1px solid #999; }
.entry { display: flex; align-items: center; height: 18px; padding-left: 4px; background: #fff; }
.entry input { flex: 1; border: 0; padding: 0; outline: 0; background: none; height: 18px; }
.ic.dim { width: 6px; height: 6px; margin: 0 2px; opacity: 0.5; }

.status { flex: none; height: 16px; display: flex; align-items: flex-start; overflow: hidden; background: linear-gradient(#8f8f8f, #828282); border-top: 1px solid #222; padding-left: 4px; }
.status > * { flex: none; }
.ratio { width: 69px; height: 20px; gap: 2px; background: linear-gradient(#aaa, #8e8e8e); font: 10px/20px "Liberation Mono", "Noto Sans CJK SC", monospace; white-space: nowrap; justify-content: flex-start; }
.ratio .ic { width: 7px; height: 7px; margin-bottom: 6px; }
.coords { width: 236px; padding-left: 8px; color: #777; font: 11px/18px "Liberation Mono", monospace; overflow: hidden; white-space: nowrap; }
.tg { width: 15px; height: 17px; border-left: 1px solid #777; background: #b0b0b0; }
.tg .ic { width: 13px; height: 13px; }
.tg.lit { background: #d2e5f0; }
.tg:nth-of-type(odd) { width: 16px; }
.status > .grow { flex: 1; }
.ms { width: 24px; height: 15px; background: #a8a8a8; font-size: 10px; line-height: 15px; }
.anno { width: 345px; height: 15px; margin-left: 14px; gap: 3px; justify-content: flex-start; background: #999; font-size: 10px; line-height: 15px; }

.overlay { position: absolute; inset: 0; display: grid; place-items: center; pointer-events: none; }
.dialog { position: relative; pointer-events: auto; width: 462px; background: #f0f0f0; border: 1px solid #5b9aa8; }
.dhead { display: flex; justify-content: space-between; align-items: center; height: 21px; background: #fff; padding: 0 9px 0 2px; }
.dhead .ic { width: 10px; height: 10px; }
.dbody { display: flex; gap: 10px; padding: 11px 4px 3px 9px; }
.left { flex: 1; min-width: 0; display: flex; flex-direction: column; }
.src { display: flex; height: 24px; align-items: center; }
.src span:first-child { width: 49px; }
.pick { display: flex; }
.radios { width: 93px; padding-top: 34px; display: flex; flex-direction: column; gap: 30px; }
.radios label { display: flex; align-items: center; gap: 2px; height: 14px; white-space: nowrap; }
.radios input { appearance: none; width: 12px; height: 12px; border: 1px solid #333; border-radius: 50%; background: #fff; }
.radios input:checked { background: radial-gradient(circle, #222 3px, #fff 4px); }
.as { flex: 1; display: flex; flex-direction: column; gap: 8px; padding-top: 5px; }
.listwrap { display: flex; height: 87px; border: 1px solid #8a8a8a; background: #fff; }
.listwrap ul { flex: 1; overflow: hidden; padding-top: 1px; }
.listwrap li { height: 14px; line-height: 14px; padding-left: 2px; }
.listwrap li.sel { background: #0a72d4; color: #d9ecff; }
.lscroll { width: 16px; display: flex; flex-direction: column; align-items: center; justify-content: space-between; padding: 3px 0; background: #f0f0f0; }
.lscroll .ic { width: 9px; height: 9px; }
.lscroll i { width: 12px; height: 41px; background: #c9c9c9; margin-bottom: 15px; }
fieldset { margin: 8px 0 0; padding: 0 0 0 20px; height: 84px; border: 1px solid #dcdcdc; display: flex; min-width: 0; }
legend { margin-left: -15px; padding: 0 1px; line-height: 14px; }
.clip { width: 32px; height: 32px; margin-top: 19px; }
fieldset p { margin: 4px 0 0 23px; white-space: nowrap; }
.side { width: 103px; display: flex; flex-direction: column; gap: 7px; }
.side button { height: 23px; border: 1px solid #adadad; background: #e1e1e1; }
.side .ok { border-color: #2b79b4; background: #e3f1fa; }
.show { display: flex; align-items: center; gap: 3px; margin-top: 37px; color: #8c8c8c; white-space: nowrap; }
.show input { appearance: none; width: 11px; height: 11px; border: 1px solid #ccc; background: #fff; }
.cursor { position: absolute; left: 386px; top: 42px; width: 10px; height: 16px; }

.brand { position: absolute; left: 42px; top: 40px; width: 196px; height: 46px; overflow: visible; }
.bt { font-family: "Noto Sans", "Noto Sans CJK SC", sans-serif; font-weight: 600; font-style: italic; fill: #fff; stroke: #2b2f36; stroke-width: 6px; stroke-linejoin: round; paint-order: stroke; }
.cj { font-family: "Noto Sans CJK SC", sans-serif; font-weight: 700; }
.sponsor { position: absolute; right: 5px; bottom: 0; width: 322px; height: 161px; background: #fefefe; }
.sponsor svg { display: block; width: 322px; height: 161px; }
.zh { font-family: "Noto Sans CJK SC", sans-serif; font-weight: 900; font-style: italic; fill: #111; }
.url { font-family: "Open Sans", sans-serif; font-weight: 600; font-style: italic; fill: #222; }
</style>
